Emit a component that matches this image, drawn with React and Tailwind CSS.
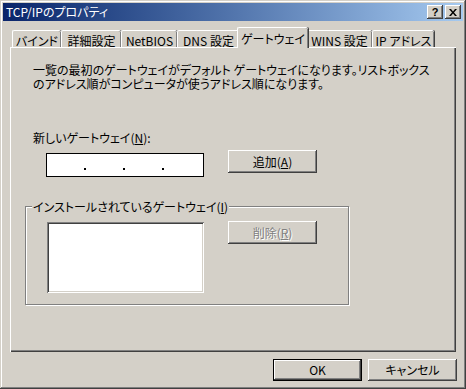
import React from "react";

const raised =
  "shadow-[inset_-1px_-1px_0_#404040,inset_1px_1px_0_#ffffff,inset_-2px_-2px_0_#808080,inset_2px_2px_0_#d4d0c8]";
const font = {
  fontFamily: '"Noto Sans CJK JP", "Liberation Sans", sans-serif',
  fontFeatureSettings: '"palt" 1',
};

function Btn({ children, w = "w-[89px]", h = "h-[23px]", disabled, def }) {
  return (
    <div
      className={`${w} ${h} flex items-center justify-center bg-[#d4d0c8] text-[12px] ${
        def
          ? "shadow-[inset_-1px_-1px_0_#000,inset_1px_1px_0_#000,inset_-2px_-2px_0_#404040,inset_2px_2px_0_#fff,inset_-3px_-3px_0_#808080]"
          : raised
      } ${disabled ? "text-[#808080] [text-shadow:1px_1px_0_#fff]" : "text-black"}`}
    >
      {children}
    </div>
  );
}

function Tab({ label, w, sel }) {
  if (sel) {
    return (
      <div
        className={`${w} h-[21px] -mx-[2px] -mb-[1px] relative z-10 bg-[#d4d0c8] border-l border-t border-white rounded-tl-[2px] rounded-tr-[2px] shadow-[inset_-1px_0_0_#808080,1px_0_0_#404040] flex items-start justify-center pt-[2px] text-[12px] text-black`}
      >
        {label}
      </div>
    );
  }
  return (
    <div
      className={`${w} h-[17px] bg-[#d4d0c8] border-l border-t border-white rounded-tl-[2px] rounded-tr-[2px] shadow-[inset_-1px_0_0_#808080,1px_0_0_#404040] flex items-start justify-center pt-[1px] text-[12px] text-black`}
    >
      {label}
    </div>
  );
}

export default function App() {
  return (
    <div
      style={font}
      className="w-[466px] h-[389px] bg-[#d4d0c8] p-[3px] flex flex-col shadow-[inset_-1px_-1px_0_#404040,inset_1px_1px_0_#d4d0c8,inset_-2px_-2px_0_#808080,inset_2px_2px_0_#ffffff] overflow-hidden"
    >
      {/* Title bar */}
      <div className="h-[18px] shrink-0 bg-linear-to-r from-[#0a246a] to-[#a6caf0] flex items-center justify-between pl-[3px] pr-[2px]">
        <span className="text-white text-[12px] leading-none">TCP/IPのプロパティ</span>
        <div className="flex gap-[2px]">
          <div className={`w-[16px] h-[14px] bg-[#d4d0c8] ${raised} flex items-center justify-center text-[11px] font-bold text-black leading-none`} style={{ fontFamily: '"Liberation Sans", sans-serif' }}>
            ?
          </div>
          <div className={`w-[16px] h-[14px] bg-[#d4d0c8] ${raised} flex items-center justify-center`}>
            <svg width="8" height="7" viewBox="0 0 8 7">
              <path d="M0 0h2l2 2.5L6 0h2L5 3.5L8 7H6L4 4.5L2 7H0l3-3.5z" fill="#000" />
            </svg>
          </div>
        </div>
      </div>

      <div className="px-[7px] pt-[7px] flex flex-col">
        {/* Tabs */}
        <div className="h-[19px] flex items-end pl-[2px] relative z-10">
          <Tab label="バインド" w="w-[49px]" />
          <Tab label="詳細設定" w="w-[60px]" />
          <Tab label="NetBIOS" w="w-[56px]" />
          <Tab label="DNS 設定" w="w-[62px]" />
          <Tab label="ゲートウェイ" w="w-[71px]" sel />
          <Tab label="WINS 設定" w="w-[66px]" />
          <Tab label="IP アドレス" w="w-[62px]" />
        </div>

        {/* Panel */}
        <div className="h-[305px] bg-[#d4d0c8] border-l border-t border-white shadow-[inset_-1px_-1px_0_#404040,inset_-2px_-2px_0_#808080] flex flex-col text-[12px] text-black">
          <div className="ml-[22px] mt-[15px] leading-[14px]">
            <div>一覧の最初のゲートウェイがデフォルト ゲートウェイになります。リストボックス</div>
            <div>のアドレス順がコンピュータが使うアドレス順になります。</div>
          </div>

          <div className="ml-[22px] mt-[40px] leading-[13px]">
            新しいゲートウェイ(<span className="underline">N</span>):
          </div>

          <div className="flex items-start mt-[6px]">
            <div className="ml-[35px] mt-[3px] w-[158px] h-[24px] bg-white border border-black flex items-end pb-[6px] pl-[37px] gap-[37px]">
              <div className="w-[2px] h-[2px] bg-black" />
              <div className="w-[2px] h-[2px] bg-black" />
              <div className="w-[2px] h-[2px] bg-black" />
            </div>
            <div className="ml-[24px]">
              <Btn>
                追加(<span className="underline">A</span>)
              </Btn>
            </div>
          </div>

          {/* Group box */}
          <div className="relative ml-[14px] mt-[29px] w-[324px] h-[99px] border border-[#808080] shadow-[inset_1px_1px_0_#ffffff,1px_1px_0_#ffffff]">
            <div className="absolute left-[6px] -top-[7px] px-[1px] bg-[#d4d0c8] leading-[13px]">
              インストールされているゲートウェイ(<span className="underline">I</span>)
            </div>
            <div className="flex items-start mt-[14px]">
              <div className="ml-[21px] mt-[1px] w-[157px] h-[71px] bg-white shadow-[inset_1px_1px_0_#808080,inset_-1px_-1px_0_#ffffff,inset_2px_2px_0_#404040,inset_-2px_-2px_0_#d4d0c8]" />
              <div className="ml-[24px]">
                <Btn disabled>
                  削除(<span className="underline">R</span>)
                </Btn>
              </div>
            </div>
          </div>
        </div>
      </div>

      {/* Bottom buttons */}
      <div className="flex justify-end gap-[6px] pr-[6px] mt-[7px]">
        <Btn def h="h-[22px]">OK</Btn>
        <Btn h="h-[22px]">キャンセル</Btn>
      </div>
    </div>
  );
}
